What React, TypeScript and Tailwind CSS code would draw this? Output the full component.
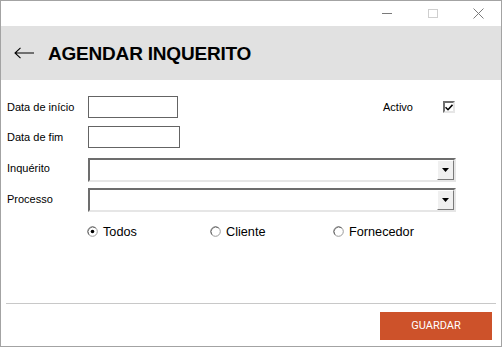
import React from "react";

function Combo() {
  return (
    <div className="flex-1 h-[24px] border-2 border-t-[#6d6d6d] border-l-[#6d6d6d] border-b-[#e6e6e6] border-r-[#e6e6e6] bg-white flex justify-end">
      <div className="w-[17px] h-full bg-[#f0f0f0] border border-t-white border-l-white border-b-[#7a7a7a] border-r-[#7a7a7a] flex items-center justify-center">
        <svg width="7" height="4" viewBox="0 0 7 4">
          <path d="M0 0H7L3.5 4Z" fill="#000" />
        </svg>
      </div>
    </div>
  );
}

function Radio({ checked, label }: { checked?: boolean; label: string }) {
  return (
    <div className="w-[123px] flex items-center">
      <svg width="11" height="11" viewBox="0 0 11 11" className="shrink-0">
        <circle cx="5.5" cy="5.5" r="4.8" fill="#fff" stroke="#9a9a9a" strokeWidth="1" />
        <path d="M1.9 8.6A4.8 4.8 0 0 1 8.6 1.9" fill="none" stroke="#6a6a6a" strokeWidth="1" />
        {checked && <circle cx="5.5" cy="5.5" r="1.8" fill="#000" />}
      </svg>
      <span className="ml-[5px] text-[12.7px] leading-none text-black">{label}</span>
    </div>
  );
}

export default function App() {
  return (
    <div className="w-[502px] h-[347px] border border-[#a3a3a3] bg-white flex flex-col font-['Liberation_Sans',Arial,sans-serif] text-black">
      {/* title bar */}
      <div className="h-[25px] flex items-center justify-end shrink-0">
        <div className="w-[46px] h-full flex items-center justify-center">
          <div className="w-[10px] h-px bg-[#7a7a7a]" />
        </div>
        <div className="w-[46px] h-full flex items-center justify-center">
          <div className="w-[10px] h-[9px] border border-[#cfcfcf]" />
        </div>
        <div className="w-[45px] h-full flex items-center justify-center">
          <svg width="11" height="11" viewBox="0 0 11 11">
            <path d="M0.5 0.5L10.5 10.5M10.5 0.5L0.5 10.5" stroke="#7a7a7a" strokeWidth="1" />
          </svg>
        </div>
      </div>

      {/* header */}
      <div className="h-[54px] bg-[#e1e1e1] flex items-center pl-[13px] shrink-0">
        <svg width="21" height="12" viewBox="0 0 21 12" className="shrink-0">
          <path d="M1 6H20M6.5 0.8L1 6L6.5 11.2" fill="none" stroke="#000" strokeWidth="1.1" />
        </svg>
        <span className="ml-[13px] text-[19px] font-bold leading-none tracking-[-0.2px]">AGENDAR INQUERITO</span>
      </div>

      {/* form */}
      <div className="flex-1 flex flex-col pt-[16px] pr-[45px] text-[11px]">
        <div className="flex items-center h-[22px]">
          <div className="w-[87px] pl-[6px]">Data de início</div>
          <div className="w-[90px] h-[22px] border border-[#646464] bg-white" />
          <div className="ml-auto flex items-center">
            <span>Activo</span>
            <div className="ml-[30px] mr-[1px] w-[12px] h-[12px] border-2 border-t-[#6d6d6d] border-l-[#6d6d6d] border-b-[#e6e6e6] border-r-[#e6e6e6] bg-white flex items-center justify-center">
              <svg width="8" height="7" viewBox="0 0 8 7">
                <path d="M0.5 3.2L3 5.7L7.5 0.8" fill="none" stroke="#000" strokeWidth="1.6" />
              </svg>
            </div>
          </div>
        </div>
        <div className="flex items-center h-[22px] mt-[8px]">
          <div className="w-[87px] pl-[6px]">Data de fim</div>
          <div className="w-[92px] h-[22px] border border-[#646464] bg-white" />
        </div>
        <div className="flex items-center mt-[10px]">
          <div className="w-[87px] pl-[6px] mb-[4px]">Inquérito</div>
          <Combo />
        </div>
        <div className="flex items-center mt-[6px]">
          <div className="w-[87px] pl-[6px] mb-[2px]">Processo</div>
          <Combo />
        </div>
        <div className="flex items-center h-[16px] mt-[12px] pl-[86px]">
          <Radio checked label="Todos" />
          <Radio label="Cliente" />
          <Radio label="Fornecedor" />
        </div>
      </div>

      {/* footer */}
      <div className="shrink-0 flex flex-col">
        <div className="mx-[5px] h-px bg-[#c8c8c8]" />
        <div className="flex justify-end pr-[9px] pt-[8px] pb-[6px]">
          <button className="w-[112px] h-[28px] bg-[#cd522a] text-white text-[11px] font-['Roboto',Arial,sans-serif] flex items-center justify-center">
            GUARDAR
          </button>
        </div>
      </div>
    </div>
  );
}
